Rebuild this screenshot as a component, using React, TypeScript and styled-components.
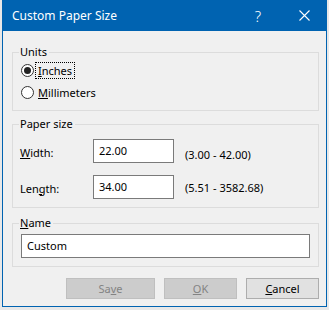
import React from 'react';
import styled, { createGlobalStyle } from 'styled-components';

const Global = createGlobalStyle`
  html, body { margin: 0; padding: 0; background: #e8e8e8; }
  body { font-family: "Noto Sans", "Liberation Sans", sans-serif; font-size: 11px; color: #000; }
  * { box-sizing: border-box; }
`;

const Page = styled.div`
  width: 329px;
  height: 310px;
  padding-left: 2px;
`;

const Window = styled.div`
  width: 325px;
  height: 307px;
  display: flex;
  flex-direction: column;
  background: #f0f0f0;
  border: 1px solid #0063b1;
  border-top: none;
`;

const TitleBar = styled.div`
  height: 31px;
  margin: 0 -1px;
  background: #0063b1;
  color: #fff;
  display: flex;
  align-items: center;
  padding-left: 10px;
  font-size: 12px;
`;

const TitleText = styled.div`
  flex: 1;
  padding-bottom: 1px;
`;

const TitleButton = styled.div`
  width: 46px;
  height: 31px;
  display: flex;
  align-items: center;
  justify-content: center;
  font-size: 15px;
  font-weight: 300;
`;

const Body = styled.div`
  flex: 1;
  display: flex;
  flex-direction: column;
  padding: 14px 7px 0 9px;
`;

const Group = styled.fieldset<{ $gap?: number; $pt?: number }>`
  margin: ${(p) => p.$gap ?? 0}px 0 0 0;
  padding: ${(p) => p.$pt ?? 0}px 7px 7px 7px;
  border: 1px solid #dcdcdc;
  min-width: 0;
`;

const Legend = styled.legend`
  padding: 0 2px 0 1px;
  margin-left: -1px;
  line-height: 14px;
  font-size: 11px;
`;

const RadioRow = styled.div`
  height: 22px;
  display: flex;
  align-items: center;
  padding-left: 1px;
`;

const RadioCircle = styled.span<{ $checked?: boolean }>`
  width: 13px;
  height: 13px;
  border-radius: 50%;
  border: 1px solid #333;
  background: #fff;
  display: flex;
  align-items: center;
  justify-content: center;
  margin-right: 2px;
  &::after {
    content: '';
    display: ${(p) => (p.$checked ? 'block' : 'none')};
    width: 7px;
    height: 7px;
    border-radius: 50%;
    background: #222;
  }
`;

const RadioLabel = styled.span<{ $focused?: boolean }>`
  padding: 0 1px;
  line-height: 13px;
  outline: ${(p) => (p.$focused ? '1px dotted #000' : 'none')};
  outline-offset: 0;
  border: 1px solid transparent;
`;

const SizeGrid = styled.div`
  display: grid;
  grid-template-columns: 62px 81px auto;
  grid-auto-rows: 24px;
  row-gap: 12px;
  column-gap: 11px;
  align-items: center;
  padding-top: 8px;
  padding-bottom: 1px;
`;

const FieldLabel = styled.span`
  padding-top: 2px;
`;

const RangeText = styled.span<{ $dy: number }>`
  padding-top: ${(p) => p.$dy}px;
`;

const TextBox = styled.div<{ $width?: number }>`
  width: ${(p) => (p.$width ? `${p.$width}px` : '100%')};
  height: 24px;
  border: 1px solid #7a7a7a;
  background: #fff;
  padding: 0 5px;
  display: flex;
  align-items: center;
  font-size: 11px;
  padding-bottom: 2px;
`;

const NameBox = styled(TextBox)`
  margin: 4px 0 1px 1px;
  width: 289px;
`;

const ButtonRow = styled.div`
  display: flex;
  justify-content: flex-end;
  gap: 9px;
  margin-top: 11px;
  padding-right: 0;
`;

const Button = styled.div<{ $disabled?: boolean; $width: number }>`
  width: ${(p) => p.$width}px;
  height: 21px;
  display: flex;
  align-items: center;
  justify-content: center;
  background: ${(p) => (p.$disabled ? '#cccccc' : '#e1e1e1')};
  border: 1px solid ${(p) => (p.$disabled ? '#bfbfbf' : '#adadad')};
  color: ${(p) => (p.$disabled ? '#838383' : '#000')};
  padding-bottom: 1px;
`;

export default function App() {
  return (
    <Page>
      <Global />
      <Window>
        <TitleBar>
          <TitleText>Custom Paper Size</TitleText>
          <TitleButton>?</TitleButton>
          <TitleButton>
            <svg width="11" height="11" viewBox="0 0 11 11">
              <path d="M0.5 0.5 L10.5 10.5 M10.5 0.5 L0.5 10.5" stroke="#fff" strokeWidth="1.1" fill="none" />
            </svg>
          </TitleButton>
        </TitleBar>
        <Body>
          <Group>
            <Legend>Units</Legend>
            <RadioRow>
              <RadioCircle $checked />
              <RadioLabel $focused>
                <u>I</u>nches
              </RadioLabel>
            </RadioRow>
            <RadioRow>
              <RadioCircle />
              <RadioLabel>
                <u>M</u>illimeters
              </RadioLabel>
            </RadioRow>
          </Group>
          <Group $gap={6}>
            <Legend>Paper size</Legend>
            <SizeGrid>
              <FieldLabel>
                <u>W</u>idth:
              </FieldLabel>
              <TextBox $width={81}>22.00</TextBox>
              <RangeText $dy={6}>(3.00 - 42.00)</RangeText>
              <FieldLabel>
                Len<u>g</u>th:
              </FieldLabel>
              <TextBox $width={81}>34.00</TextBox>
              <RangeText $dy={0}>(5.51 - 3582.68)</RangeText>
            </SizeGrid>
          </Group>
          <Group $gap={8}>
            <Legend>
              <u>N</u>ame
            </Legend>
            <NameBox>Custom</NameBox>
          </Group>
          <ButtonRow>
            <Button $disabled $width={89}>
              <span>
                Sa<u>v</u>e
              </span>
            </Button>
            <Button $disabled $width={73}>
              <span>
                <u>O</u>K
              </span>
            </Button>
            <Button $width={73}>
              <span>
                <u>C</u>ancel
              </span>
            </Button>
          </ButtonRow>
        </Body>
      </Window>
    </Page>
  );
}
